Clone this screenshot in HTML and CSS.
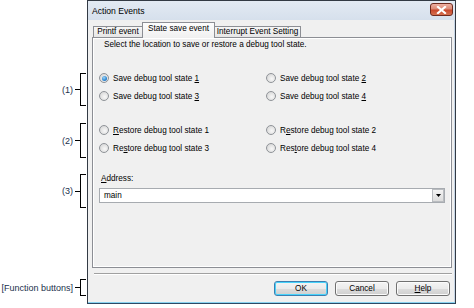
FILE: index.html
```html
<!DOCTYPE html>
<html>
<head>
<meta charset="utf-8">
<link rel="stylesheet" href="styles.css">
</head>
<body>
<div class="page">
  <div class="notes">
    <div class="note n1"><span class="label">(1)</span><span class="tick"></span><span class="brace"></span></div>
    <div class="note n2"><span class="label">(2)</span><span class="tick"></span><span class="brace"></span></div>
    <div class="note n3"><span class="label">(3)</span><span class="tick"></span><span class="brace"></span></div>
    <div class="note n4"><span class="label">[Function buttons]</span><span class="tick"></span><span class="brace"></span></div>
  </div>
  <div class="window">
    <div class="titlebar">
      <span class="title">Action Events</span>
      <span class="close"><svg width="11" height="8" viewBox="0 0 11 8"><path d="M2 1 L9 7 M9 1 L2 7" stroke="#fff" stroke-width="2.2" stroke-linecap="square"/></svg></span>
    </div>
    <div class="client">
      <div class="tabs">
        <div class="tab t1">Printf event</div>
        <div class="tab t2 active">State save event</div>
        <div class="tab t3">Interrupt Event Setting</div>
      </div>
      <div class="panel">
        <div class="desc">Select the location to save or restore a debug tool state.</div>
        <div class="radios g1">
          <div class="radio"><span class="dot checked"></span><span>Save debug tool state <u>1</u></span></div>
          <div class="radio"><span class="dot"></span><span>Save debug tool state <u>2</u></span></div>
          <div class="radio"><span class="dot"></span><span>Save debug tool state <u>3</u></span></div>
          <div class="radio"><span class="dot"></span><span>Save debug tool state <u>4</u></span></div>
        </div>
        <div class="radios g2">
          <div class="radio"><span class="dot"></span><span><u>R</u>estore debug tool state 1</span></div>
          <div class="radio"><span class="dot"></span><span>R<u>e</u>store debug tool state 2</span></div>
          <div class="radio"><span class="dot"></span><span>Re<u>s</u>tore debug tool state 3</span></div>
          <div class="radio"><span class="dot"></span><span>Res<u>t</u>ore debug tool state 4</span></div>
        </div>
        <div class="addr-label"><u>A</u>ddress:</div>
        <div class="combo">
          <span class="combo-text">main</span>
          <span class="combo-btn"><svg width="5" height="3" viewBox="0 0 5 3"><path d="M0 0 H5 L2.5 3 Z" fill="#000"/></svg></span>
        </div>
      </div>
      <div class="sep"></div>
      <div class="buttons">
        <span class="btn default">OK</span>
        <span class="btn">Cancel</span>
        <span class="btn"><u>H</u>elp</span>
      </div>
    </div>
  </div>
</div>
</body>
</html>
```

FILE: styles.css
```css
* { box-sizing: border-box; }
html, body { margin: 0; padding: 0; background: #fff; }
body { font-family: "Liberation Sans", Arial, sans-serif; font-size: 8.2px; color: #000; }
.page { display: flex; width: 474px; height: 308px; }

.notes { width: 87px; display: flex; flex-direction: column; }
.note { display: flex; align-items: center; justify-content: flex-end; padding-right: 1px; }
.note .label { font-size: 9px; color: #22304c; line-height: 10px; }
.note .tick { width: 5px; height: 1px; background: #000; margin-left: 2px; }
.note .brace { width: 6px; height: 100%; border: 1px solid #000; border-right: none; }
.n1 { margin-top: 73px; height: 33px; }
.n2 { margin-top: 17px; height: 35px; }
.n3 { margin-top: 16px; height: 34px; }
.n4 { margin-top: 71px; height: 17px; }

.window {
  width: 369px; height: 304px;
  border: 1px solid #333a44;
  border-bottom-color: #2c4a66;
  background: #f0f0f0;
  display: flex; flex-direction: column;
  box-shadow: inset 0 -1px 0 #8ad3f0, inset -1px 0 0 #c7d6e6;
}
.titlebar {
  height: 19px; flex: none;
  display: flex; align-items: center; justify-content: space-between;
  padding: 0 2px 0 4px;
  background: linear-gradient(#e3eaf3, #d6e0ec);
}
.title { font-size: 8.6px; color: #000; }
.close {
  width: 23px; height: 13px; margin-top: -2px;
  border: 1px solid #6e2a1e; border-radius: 3px;
  background: linear-gradient(#eeb0a2 0%, #dc8a76 45%, #c9482c 55%, #d5704f 100%);
  display: flex; align-items: center; justify-content: center;
}
.close svg { display: block; }

.client { flex: 1; display: flex; flex-direction: column; padding: 2px 3px 0 4px; }

.tabs { display: flex; align-items: flex-end; height: 15px; padding-left: 1px; }
.tab {
  height: 11px; line-height: 10px; text-align: center;
  border: 1px solid #8c8e94; border-bottom: none;
  background: linear-gradient(#f6f6f6, #e6e6e6);
  white-space: nowrap;
}
.t1 { width: 49px; border-right: none; }
.t2 { width: 73px; }
.t3 { width: 86px; border-left: none; }
.tab.active {
  height: 16px; margin-bottom: -1px; position: relative; z-index: 1;
  background: linear-gradient(#fdfdfd, #f0f0f0);
  line-height: 11px; padding-bottom: 2px;
}

.panel {
  height: 231px; width: 360px;
  border: 1px solid #8c8e94;
  box-shadow: inset 1px 1px 0 #fff, inset -1px -1px 0 #fff;
  background: #f0f0f0;
  padding: 1px 0 0 6px;
  display: flex; flex-direction: column;
}
.desc { height: 12px; line-height: 12px; padding-left: 5px; white-space: nowrap; }
.radios { display: grid; grid-template-columns: 167px 1fr; grid-auto-rows: 18px; }
.g1 { margin-top: 18px; }
.g2 { margin-top: 16px; }
.radio { display: flex; align-items: center; white-space: nowrap; }
.dot {
  width: 10px; height: 10px; border-radius: 50%;
  border: 1px solid #8f9398;
  background: radial-gradient(circle at 60% 60%, #f8f8f8 0%, #e2e2e2 55%, #cfcfcf 100%);
  margin-right: 4px; flex: none;
  display: flex; align-items: center; justify-content: center;
}
.dot.checked::after {
  content: ""; width: 5px; height: 5px; border-radius: 50%;
  background: radial-gradient(circle at 40% 35%, #9fd4f6 0%, #2c86d2 60%, #1a5aa0 100%);
}
.addr-label { margin-top: 16px; height: 12px; line-height: 12px; padding-left: 2px; }
.combo {
  margin-top: 3px; width: 346px; height: 15px;
  border: 1px solid #a7abb0; background: #fff;
  display: flex; align-items: center; justify-content: space-between;
  padding: 0 0 0 4px;
}
.combo-text { line-height: 12px; }
.combo-btn {
  width: 12px; height: 13px;
  border: 1px solid #b9bcc0;
  background: linear-gradient(#f3f3f3, #dcdcdc);
  display: flex; align-items: center; justify-content: center;
}
.combo-btn svg { display: block; }

.sep { margin: 5px 0 0 2px; height: 2px; border-top: 1px solid #a0a0a0; border-bottom: 1px solid #fff; }
.buttons { display: flex; justify-content: flex-end; gap: 7px; margin-top: 6px; padding-right: 2px; }
.btn {
  width: 54px; height: 15px; line-height: 13px; text-align: center;
  border: 1px solid #707070; border-radius: 3px;
  background: linear-gradient(#f4f4f4 0%, #ebebeb 50%, #dddddd 51%, #cfcfcf 100%);
  box-shadow: inset 0 0 0 1px #fbfbfb;
}
.btn.default { border-color: #3c7fb1; box-shadow: inset 0 0 0 1px #48d3fb; }
```
